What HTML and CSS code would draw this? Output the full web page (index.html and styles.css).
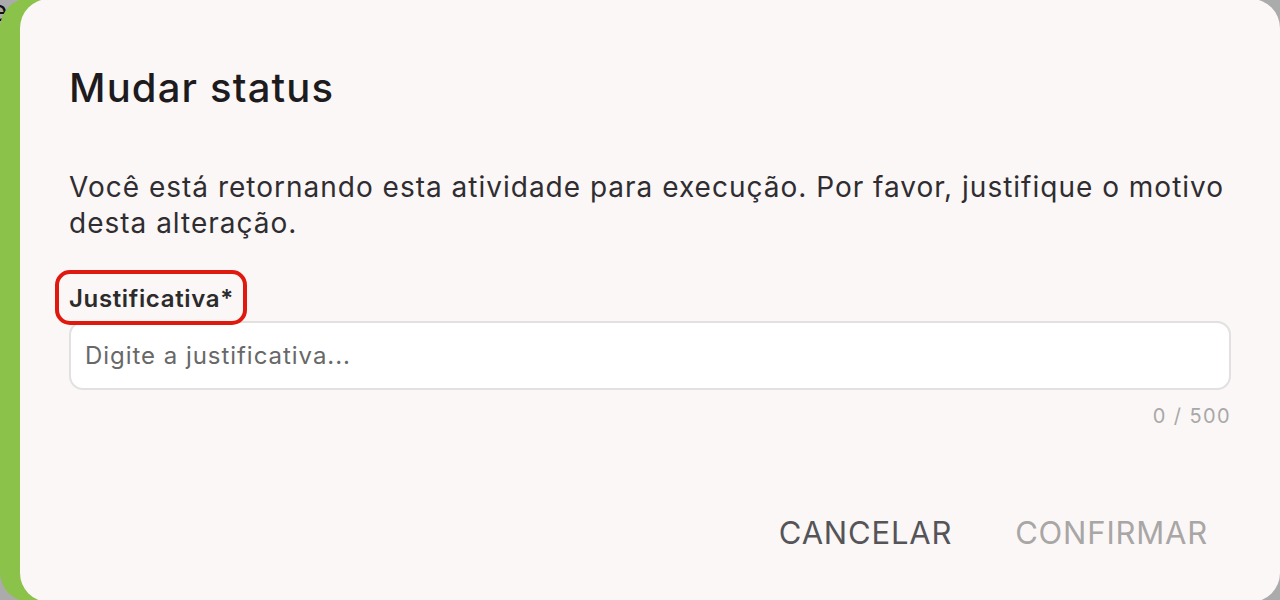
FILE: index.html
```html
<!DOCTYPE html>
<html lang="pt-BR">
<head>
<meta charset="utf-8">
<title>Mudar status</title>
<link rel="stylesheet" href="styles.css">
</head>
<body>
<div class="backdrop">
  <span class="peek">e</span>
  <div class="card-green"></div>
</div>
<div class="dialog" role="dialog" aria-labelledby="dlg-title">
  <h2 class="title" id="dlg-title">Mudar status</h2>
  <p class="desc">Você está retornando esta atividade para execução. Por favor, justifique o motivo desta alteração.</p>
  <label class="label" for="just"><span class="label-text">Justificativa*</span></label>
  <div class="field">
    <input id="just" class="input" type="text" placeholder="Digite a justificativa...">
  </div>
  <div class="counter">0 / 500</div>
  <div class="actions">
    <button class="btn btn-cancel" type="button">CANCELAR</button>
    <button class="btn btn-confirm" type="button" disabled>CONFIRMAR</button>
  </div>
</div>
</body>
</html>
```

FILE: styles.css
```css
* { box-sizing: border-box; }
html, body {
  margin: 0;
  padding: 0;
  width: 1280px;
  height: 600px;
  overflow: hidden;
}
body {
  background: #ababab;
  font-family: Inter, "Noto Sans", sans-serif;
  position: relative;
}
.backdrop {
  position: absolute;
  inset: 0;
}
.peek {
  position: absolute;
  left: -9px;
  top: -6px;
  font-size: 28px;
  color: #111;
  font-family: Inter, sans-serif;
}
.card-green {
  position: absolute;
  left: 0;
  top: -2px;
  width: 200px;
  height: 604px;
  background: #8bc34a;
  border-radius: 30px;
}
.dialog {
  position: absolute;
  left: 20px;
  top: -1px;
  width: 1260px;
  height: 603px;
  background: #fbf7f6;
  border-radius: 29px;
  padding: 65px 49px 0 49px;
  display: flex;
  flex-direction: column;
}
.title {
  margin: 0;
  font-size: 40px;
  line-height: 48px;
  font-weight: 500;
  color: #1d1b1e;
  letter-spacing: 1.15px;
}
.desc {
  margin: 57px 0 0 0;
  font-size: 28px;
  line-height: 36px;
  color: #2f2d31;
  letter-spacing: 1px;
}
.label {
  margin-top: 43px;
  align-self: flex-start;
  font-size: 24px;
  line-height: 30px;
  font-weight: 600;
  color: #2b2b2b;
  letter-spacing: 0.65px;
}
.label-text {
  position: relative;
  display: inline-block;
}
.label-text::after {
  content: "";
  position: absolute;
  left: -14px;
  right: -13px;
  top: -14px;
  bottom: -11px;
  border: 4px solid #e0190f;
  border-radius: 15px;
}
.field {
  margin-top: 7px;
}
.input {
  display: block;
  width: 100%;
  height: 69px;
  border: 2px solid #e2e0e0;
  border-radius: 14px;
  background: #ffffff;
  padding: 0 14px;
  font-family: Inter, "Noto Sans", sans-serif;
  font-size: 24px;
  letter-spacing: 0.96px;
  color: #333;
  outline: none;
}
.input::placeholder {
  color: #686868;
}
.counter {
  margin-top: 14px;
  align-self: flex-end;
  font-size: 20px;
  line-height: 24px;
  color: #a8a8a8;
  letter-spacing: 1.4px;
}
.actions {
  margin-top: 86px;
  display: flex;
  justify-content: flex-end;
  gap: 17px;
}
.btn {
  border: none;
  background: transparent;
  font-family: Inter, "Noto Sans", sans-serif;
  font-size: 31px;
  line-height: 37px;
  font-weight: 400;
  letter-spacing: 0.8px;
  padding: 0 23px;
  cursor: pointer;
}
.btn-cancel { color: #555458; }
.btn-confirm { color: #a9a6a6; cursor: default; }
```
